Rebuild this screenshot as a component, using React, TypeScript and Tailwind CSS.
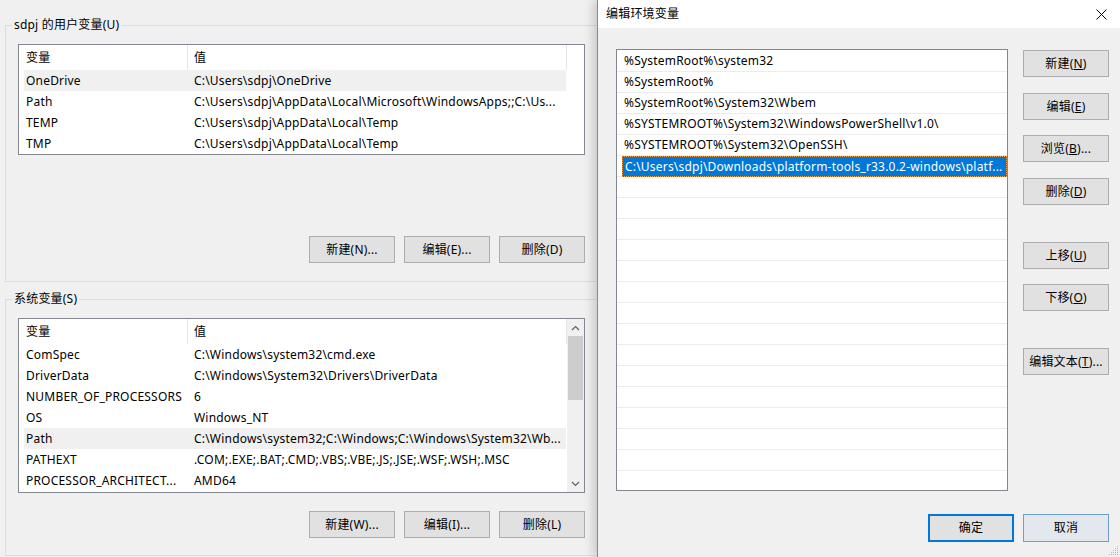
import React from 'react';

const font = "font-['Noto_Sans','Noto_Sans_CJK_SC',sans-serif]";

function Btn({ children, className = '' }: { children: React.ReactNode; className?: string }) {
  return (
    <button
      className={`h-[27px] w-[86px] shrink-0 border border-[#adadad] bg-[#e1e1e1] text-[12px] leading-none tracking-[0.2px] text-black ${className}`}
    >
      {children}
    </button>
  );
}

type Row = [string, string];

const userVars: Row[] = [
  ['OneDrive', 'C:\\Users\\sdpj\\OneDrive'],
  ['Path', 'C:\\Users\\sdpj\\AppData\\Local\\Microsoft\\WindowsApps;;C:\\Us...'],
  ['TEMP', 'C:\\Users\\sdpj\\AppData\\Local\\Temp'],
  ['TMP', 'C:\\Users\\sdpj\\AppData\\Local\\Temp'],
];

const sysVars: Row[] = [
  ['ComSpec', 'C:\\Windows\\system32\\cmd.exe'],
  ['DriverData', 'C:\\Windows\\System32\\Drivers\\DriverData'],
  ['NUMBER_OF_PROCESSORS', '6'],
  ['OS', 'Windows_NT'],
  ['Path', 'C:\\Windows\\system32;C:\\Windows;C:\\Windows\\System32\\Wb...'],
  ['PATHEXT', '.COM;.EXE;.BAT;.CMD;.VBS;.VBE;.JS;.JSE;.WSF;.WSH;.MSC'],
  ['PROCESSOR_ARCHITECT...', 'AMD64'],
];

const pathEntries = [
  '%SystemRoot%\\system32',
  '%SystemRoot%',
  '%SystemRoot%\\System32\\Wbem',
  '%SYSTEMROOT%\\System32\\WindowsPowerShell\\v1.0\\',
  '%SYSTEMROOT%\\System32\\OpenSSH\\',
  'C:\\Users\\sdpj\\Downloads\\platform-tools_r33.0.2-windows\\platf...',
];

function VarList({ rows, hot, scroll }: { rows: Row[]; hot: number; scroll?: boolean }) {
  return (
    <div className="flex w-[567px] border border-[#828790] bg-white">
      <div className="flex-1 overflow-hidden">
        {/* header */}
        <div className="flex h-[25px] w-[548px] items-center">
          <div className="w-[168px] pl-[7px]">变量</div>
          <div className="h-full w-px bg-[#e5e5e5]" />
          <div className="flex-1 pl-[6px]">值</div>
          <div className="h-full w-px bg-[#e5e5e5]" />
        </div>
        {rows.map(([k, v], i) => (
          <div
            key={k + i}
            className={`ml-[5px] flex h-[21px] w-[542px] items-center whitespace-nowrap ${i === hot ? 'bg-[#f0f0f0]' : ''}`}
          >
            <div className="w-[170px] overflow-hidden pl-[2px]">{k}</div>
            <div className="flex-1 overflow-hidden">{v}</div>
          </div>
        ))}
      </div>
      {scroll && (
        <div className="flex w-[17px] flex-col items-center bg-[#f0f0f0]">
          <div className="flex h-[17px] items-center justify-center">
            <svg width="9" height="6" viewBox="0 0 9 6">
              <path d="M1 5 L4.5 1.5 L8 5" fill="none" stroke="#606060" strokeWidth="1.2" />
            </svg>
          </div>
          <div className="h-[64px] w-[15px] bg-[#cdcdcd]" />
          <div className="flex-1" />
          <div className="flex h-[17px] items-center justify-center">
            <svg width="9" height="6" viewBox="0 0 9 6">
              <path d="M1 1 L4.5 4.5 L8 1" fill="none" stroke="#606060" strokeWidth="1.2" />
            </svg>
          </div>
        </div>
      )}
    </div>
  );
}

export default function App() {
  return (
    <div className={`flex h-[557px] w-[1120px] overflow-hidden bg-[#f0f0f0] text-[12px] tracking-[0.2px] text-black ${font}`}>
      {/* environment variables window (behind) */}
      <div className="flex w-[597px] shrink-0 flex-col pl-[5px] pt-[17px]">
        <fieldset className="border border-r-0 border-[#dcdcdc] p-0">
          <legend className="ml-[6px] px-[2px] leading-[16px]">sdpj 的用户变量(U)</legend>
          <div className="pb-[18px] pl-[12px] pt-[11px]">
            <div className="h-[176px]">
              <VarList rows={userVars} hot={0} />
            </div>
            <div className="mt-[16px] flex w-[567px] justify-end gap-[9px]">
              <Btn>新建(N)...</Btn>
              <Btn>编辑(E)...</Btn>
              <Btn>删除(D)</Btn>
            </div>
          </div>
        </fieldset>
        <fieldset className="mt-[9px] border border-r-0 border-[#dcdcdc] p-0">
          <legend className="ml-[6px] px-[2px] leading-[16px]">系统变量(S)</legend>
          <div className="pb-[17px] pl-[12px] pt-[11px]">
            <div className="flex h-[175px]">
              <VarList rows={sysVars} hot={4} scroll />
            </div>
            <div className="mt-[18px] flex w-[567px] justify-end gap-[9px]">
              <Btn>新建(W)...</Btn>
              <Btn>编辑(I)...</Btn>
              <Btn>删除(L)</Btn>
            </div>
          </div>
        </fieldset>
      </div>

      {/* edit dialog */}
      <div className="relative flex flex-1 flex-col border-l border-[#8a8a8a] shadow-[-4px_0_9px_rgba(0,0,0,0.16)]">
        <div className="flex h-[28px] items-center justify-between bg-white pl-[8px] pr-[13px]">
          <span>编辑环境变量</span>
          <svg width="11" height="11" viewBox="0 0 11 11">
            <path d="M0.5 0.5 L10.5 10.5 M10.5 0.5 L0.5 10.5" stroke="#000" strokeWidth="1" />
          </svg>
        </div>
        <div className="flex pl-[18px] pt-[21px]">
          <div className="h-[442px] w-[392px] overflow-hidden border border-[#828790] bg-white pt-px">
            {Array.from({ length: 21 }).map((_, i) => {
              const text = pathEntries[i];
              const sel = i === 5;
              return (
                <div key={i} className="h-[21px] border-b border-[#ececec] pl-px">
                  {sel ? (
                    <div className="ml-[4px] flex h-[21px] items-center whitespace-nowrap border border-dotted border-[#f5a048] bg-[#0078d7] pl-[2px] text-white">
                      {text}
                    </div>
                  ) : (
                    <div className="flex h-[20px] items-center whitespace-nowrap pl-[6px]">{text ?? ''}</div>
                  )}
                </div>
              );
            })}
          </div>
          <div className="ml-[15px] flex flex-col pt-px">
            <Btn>新建(<u>N</u>)</Btn>
            <Btn className="mt-[16px]">编辑(<u>E</u>)</Btn>
            <Btn className="mt-[15px]">浏览(<u>B</u>)...</Btn>
            <Btn className="mt-[16px]">删除(<u>D</u>)</Btn>
            <Btn className="mt-[37px]">上移(<u>U</u>)</Btn>
            <Btn className="mt-[15px]">下移(<u>O</u>)</Btn>
            <Btn className="mt-[37px]">编辑文本(<u>T</u>)...</Btn>
          </div>
        </div>
        <div className="mt-[23px] flex justify-end gap-[9px] pr-[11px]">
          <button className="h-[28px] w-[86px] border-2 border-[#0078d7] bg-[#e1e1e1] leading-none">确定</button>
          <button className="h-[28px] w-[86px] border border-[#6f9fd0] bg-[#e3e8ee] leading-none">取消</button>
        </div>
        {/* size grip */}
        <svg className="absolute bottom-[1px] right-[1px]" width="10" height="10" viewBox="0 0 10 10">
          <g fill="#b8b8b8">
            <rect x="8" y="0" width="1" height="1" />
            <rect x="6" y="2" width="1" height="1" />
            <rect x="8" y="2" width="1" height="1" />
            <rect x="4" y="4" width="1" height="1" />
            <rect x="6" y="4" width="1" height="1" />
            <rect x="8" y="4" width="1" height="1" />
            <rect x="2" y="6" width="1" height="1" />
            <rect x="4" y="6" width="1" height="1" />
            <rect x="6" y="6" width="1" height="1" />
            <rect x="8" y="6" width="1" height="1" />
            <rect x="0" y="8" width="1" height="1" />
            <rect x="2" y="8" width="1" height="1" />
            <rect x="4" y="8" width="1" height="1" />
            <rect x="6" y="8" width="1" height="1" />
            <rect x="8" y="8" width="1" height="1" />
          </g>
        </svg>
      </div>
    </div>
  );
}
